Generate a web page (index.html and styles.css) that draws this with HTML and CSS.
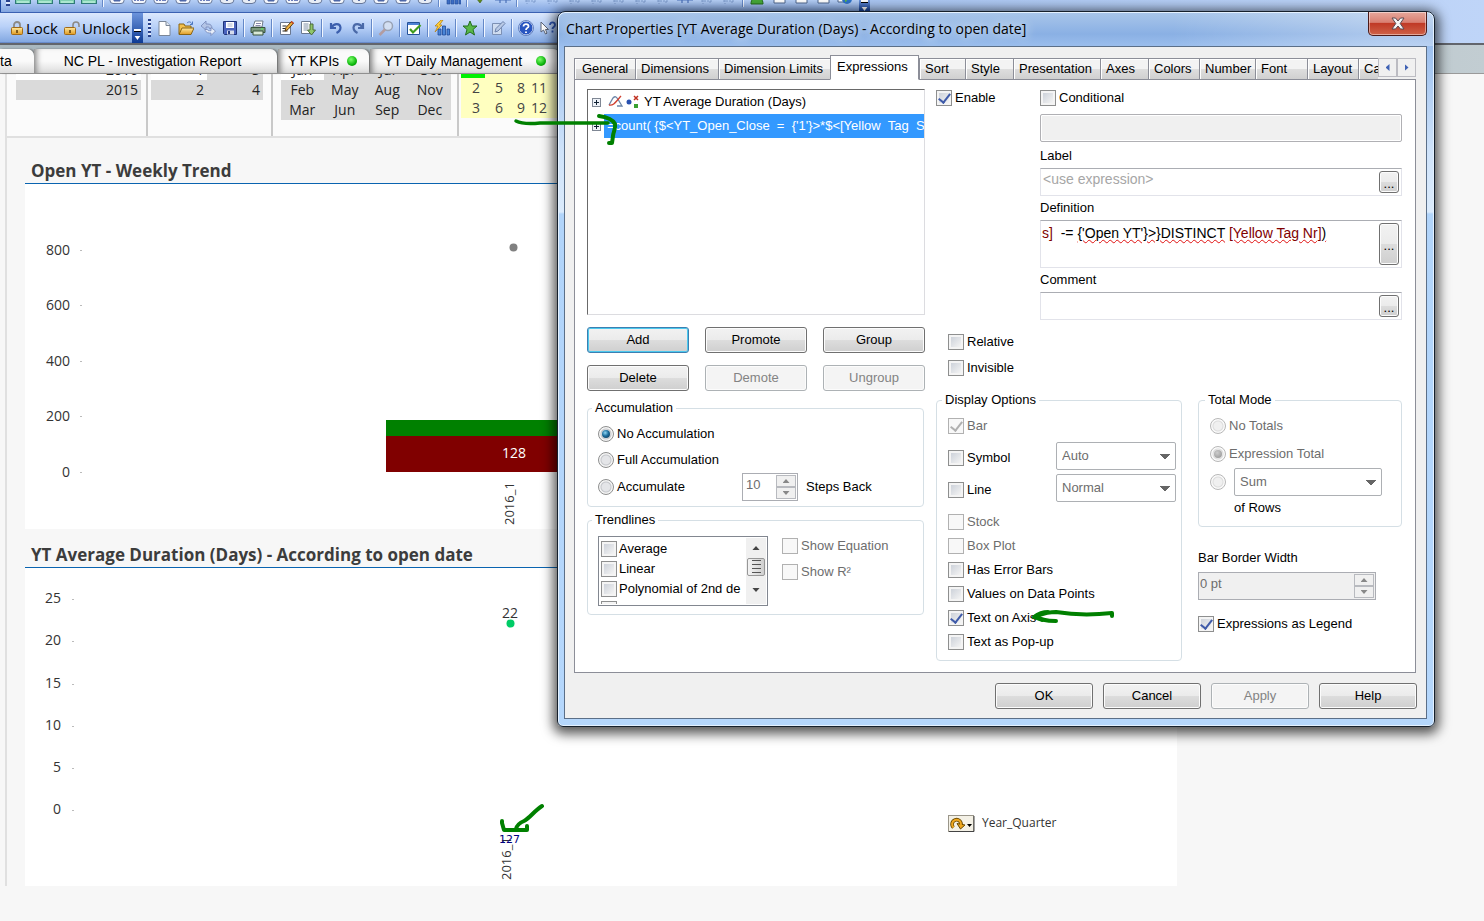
FILE: index.html
```html
<!DOCTYPE html>
<html lang="en">
<head>
<meta charset="utf-8">
<title>Chart Properties</title>
<link rel="stylesheet" href="styles.css">
</head>
<body>
<svg class="defs" width="0" height="0" aria-hidden="true">
  <defs>
    <linearGradient id="gFold" x1="0" y1="0" x2="0" y2="1"><stop offset="0" stop-color="#ffe9a0"/><stop offset="1" stop-color="#e09a20"/></linearGradient>
    <symbol id="t-green" viewBox="0 0 16 16"><rect x=".5" y=".5" width="15" height="14" fill="#7fd0ae" stroke="#2f7a78"/><path d="M2 13h12M3 7l4 4 5-5" stroke="#d9fff0" fill="none"/></symbol>
    <symbol id="t-box" viewBox="0 0 16 16"><rect x="1" y="1" width="14" height="13.5" rx="3" fill="#f4f7fc" stroke="#66779a"/><path d="M5 11.500h6M5 9v3h6V9" stroke="#4e68a8" fill="none"/></symbol>
    <symbol id="t-box2" viewBox="0 0 16 16"><rect x="1" y="1" width="14" height="13.500" rx="3" fill="#f4f7fc" stroke="#66779a"/><path d="M4 12V8M7 12V6M10 12V8M12 12V5" stroke="#4058a8" stroke-width="1.500"/></symbol>
    <symbol id="t-box3" viewBox="0 0 16 16"><rect x="1" y="1" width="14" height="13.500" rx="4" fill="#e8edf5" stroke="#66779a"/><path d="M8 4v8M5 9l3 3 3-3" stroke="#5870a8" fill="none"/></symbol>
    <symbol id="t-bars" viewBox="0 0 16 16"><path d="M2 15V8h3v7zM6 15V4h3v11zM10 15V7h3v8zM14 15v-5h2v5z" fill="#3c6dc4" stroke="#234a94" stroke-width=".6"/></symbol>
    <symbol id="t-chk" viewBox="0 0 16 16"><path d="M3 9l4 5 5-7-2-2-3 5-2-3z" fill="#5f8a1c" stroke="#3d5c10" stroke-width=".6"/></symbol>
    <symbol id="t-line" viewBox="0 0 16 16"><path d="M0 11h16M5 5v9M11 5v9" stroke="#4a70b8" stroke-width="1.200" fill="none"/></symbol>
    <symbol id="t-dim" viewBox="0 0 16 16"><path d="M2 12h12M4 8v7M8 9v3M11 9v6" stroke="#7c9acb" stroke-dasharray="2 1" fill="none"/></symbol>
    <symbol id="t-man" viewBox="0 0 16 16"><path d="M2 15c0-5 3-7 6-7s6 2 6 7z" fill="#46a838" stroke="#226a18"/><path d="M6 8l2 3 2-3z" fill="#fff"/></symbol>
    <symbol id="t-doc" viewBox="0 0 16 16"><path d="M3 1h11v13H3z" fill="#fff" stroke="#506890"/></symbol>
    <symbol id="t-globe" viewBox="0 0 16 16"><path d="M1 1h8v12H1z" fill="#fff" stroke="#506890"/><circle cx="10" cy="10" r="5" fill="#2f72c8"/><path d="M8 7c3-1 5 1 3 3s-1 3-3 3" fill="#5cb848"/></symbol>
    <symbol id="i-lock" viewBox="0 0 12 14"><path d="M3 7V4a3 3 0 0 1 6 0v3" fill="none" stroke="#8c8a86" stroke-width="1.800"/><rect x=".5" y="6.500" width="11" height="7" rx="1" fill="url(#gFold)" stroke="#a06a18"/><path d="M6 9v3" stroke="#5a3a08" stroke-width="1.500"/></symbol>
    <symbol id="i-unlock" viewBox="0 0 16 14"><path d="M9 7V4a3 3 0 0 1 6 0v2" fill="none" stroke="#8c8a86" stroke-width="1.600"/><rect x=".5" y="6.500" width="11" height="7" rx="1" fill="url(#gFold)" stroke="#a06a18"/><path d="M6 9v3" stroke="#5a3a08" stroke-width="1.500"/></symbol>
    <symbol id="i-new" viewBox="0 0 16 16"><path d="M3 1.500h7l4 4v10H3z" fill="#fff" stroke="#7a8698"/><path d="M10 1.500v4h4" fill="#dfe6f0" stroke="#7a8698"/></symbol>
    <symbol id="i-open" viewBox="0 0 16 16"><path d="M1 14V4h5l1 2h6v3" fill="#f3c04c" stroke="#8a6412"/><path d="M1 14.500L4 8h12l-3 6.500z" fill="url(#gFold)" stroke="#8a6412"/><path d="M9 3c2-2 4-1 5 1M14.500 1.500V4.500H12" fill="none" stroke="#4a76c0"/></symbol>
    <symbol id="i-refresh" viewBox="0 0 16 16"><path d="M1 6l5-5v3h2c3 0 4 2 4 4.500H9.500C9.500 7.500 9 7 8 7H6v3z" fill="#b4c5e6" stroke="#7487b8" stroke-width=".8"/><path d="M15.500 11l-4.500 4.500V13H9.500C6.500 13 5 11 5 9.500h2.500c0 .8.7 1.200 2 1.200H11V7.500z" fill="#e6edf9" stroke="#7487b8" stroke-width=".8"/></symbol>
    <symbol id="i-save" viewBox="0 0 16 16"><path d="M1.500 1.500h13v13h-12l-1-1z" fill="#4a63bc" stroke="#1e3278"/><path d="M4 2h8v6H4z" fill="#fff"/><path d="M5 10.500h7v4H5z" fill="#d5dcec"/><path d="M6 11h2v3H6z" fill="#263a80"/><path d="M5.500 4h5M5.500 6h5" stroke="#a9b4cc"/></symbol>
    <symbol id="i-print" viewBox="0 0 16 16"><path d="M5 1h8l-1 6H3z" fill="#fff" stroke="#6c7a88"/><path d="M1 7.500h14v5H1z" fill="#7e9a80" stroke="#38543c"/><path d="M3 11h10v4H3z" fill="#d9e8d6" stroke="#38543c"/><path d="M6 3.500h5M5.500 5.500h5" stroke="#88a"/><path d="M11 9h2" stroke="#5de05d" stroke-width="1.500"/></symbol>
    <symbol id="i-edit" viewBox="0 0 16 16"><path d="M2.500 2.500h10v12h-10z" fill="#fff" stroke="#6a7890"/><path d="M4.500 6h4M4.500 8.500h3M4.500 11h5" stroke="#222"/><path d="M7 11l1-3.500 5.500-6L15.500 3 10 9.500z" fill="#f0b23c" stroke="#5a3a10"/><path d="M13 1.500L15.500 3.500" stroke="#d04020" stroke-width="1.500"/></symbol>
    <symbol id="i-export" viewBox="0 0 16 16"><path d="M1.500 1.500h9v12h-9z" fill="#fff" stroke="#6a7890"/><path d="M3.500 4h5M3.500 6h5M3.500 8h5M3.500 10h4" stroke="#8090a8"/><path d="M10 4h3v6h2.500L11.500 15 7.500 10H10z" fill="#8fc66a" stroke="#4a6a38"/></symbol>
    <symbol id="i-undo" viewBox="0 0 16 16"><path d="M3 3v5h5M3.500 7.500C6 3 12 3 12.500 7.500c0 3-2 4.500-4 5.500" fill="none" stroke="#3c5fae" stroke-width="2.200"/></symbol>
    <symbol id="i-redo" viewBox="0 0 16 16"><path d="M13 3v5H8M12.500 7.500C10 3 4 3 3.500 7.500c0 3 2 4.500 4 5.500" fill="none" stroke="#4a69a8" stroke-width="2.200"/></symbol>
    <symbol id="i-search" viewBox="0 0 16 16"><circle cx="10" cy="6" r="4.500" fill="#d3dff2" stroke="#98a2b4" stroke-width="1.500"/><path d="M7 9.500L1.500 15" stroke="#b29ca0" stroke-width="2.500"/></symbol>
    <symbol id="i-check" viewBox="0 0 16 16"><path d="M1.500 2.500h12v12h-12z" fill="#fff" stroke="#24529a"/><path d="M2 4h11" stroke="#4e82d6" stroke-width="2"/><path d="M4 9l3 3.500L14.500 5" fill="none" stroke="#3f9c1c" stroke-width="2.200"/></symbol>
    <symbol id="i-chart" viewBox="0 0 16 16"><path d="M4 15V9h3v6zM8.500 15V6h3v9zM13 15V9h2.500v6z" fill="#4a86d8" stroke="#1e4a98" stroke-width=".8"/><path d="M7 0L1 6h3l-3 6 7-7H5.500L9 0z" fill="#ffcf3a" stroke="#b07a10" stroke-width=".7"/></symbol>
    <symbol id="i-star" viewBox="0 0 16 16"><path d="M8 1l2 5h5l-4 3.500 1.500 5.500L8 12l-4.500 3L5 9.500 1 6h5z" fill="#58b848" stroke="#256e20"/></symbol>
    <symbol id="i-note" viewBox="0 0 16 16"><path d="M2.500 3.500h9v11h-9z" fill="#cfdcf0" stroke="#7c90b4"/><path d="M5 12l1-3.500L13 1.500l2 2L8 11z" fill="#b9cae6" stroke="#6c82ac"/></symbol>
    <symbol id="i-help" viewBox="0 0 16 16"><circle cx="8" cy="8" r="7" fill="#2a56c0" stroke="#dfe8fa"/><circle cx="8" cy="8" r="7.500" fill="none" stroke="#3a5ca8" stroke-width=".7"/><path d="M5.500 6.500C5.500 3 11 3.500 10.500 6.500 10 8 8 8 8 10M8 11.500v1.500" fill="none" stroke="#fff" stroke-width="1.800"/></symbol>
    <symbol id="i-what" viewBox="0 0 16 16"><path d="M1 2v10l2.500-2L5.500 14l1.500-.8L5.500 9.500H8.500z" fill="#fff" stroke="#5a6478"/><path d="M10 5c0-3.500 5-3.500 5 0 0 2-2.500 2-2.500 4M12.500 10.500v2" fill="none" stroke="#2f58b8" stroke-width="1.800"/></symbol>
  </defs>
</svg>

<div class="app">
  <div class="bars">
    <div class="toolbar toolbar-top" aria-hidden="true">
      <i class="cap"></i><i class="grip"></i>
      <svg class="ic"><use href="#t-green"/></svg><svg class="ic"><use href="#t-green"/></svg><svg class="ic"><use href="#t-green"/></svg><svg class="ic"><use href="#t-green"/></svg>
      <i class="sep"></i>
      <svg class="ic"><use href="#t-box"/></svg><svg class="ic"><use href="#t-box2"/></svg><svg class="ic"><use href="#t-box2"/></svg><svg class="ic"><use href="#t-box"/></svg><svg class="ic"><use href="#t-box2"/></svg><svg class="ic"><use href="#t-box3"/></svg><svg class="ic"><use href="#t-box3"/></svg><svg class="ic"><use href="#t-box"/></svg><svg class="ic"><use href="#t-box2"/></svg><svg class="ic"><use href="#t-box3"/></svg><svg class="ic"><use href="#t-box"/></svg><svg class="ic"><use href="#t-box3"/></svg><svg class="ic"><use href="#t-box"/></svg><svg class="ic"><use href="#t-box"/></svg><svg class="ic"><use href="#t-box3"/></svg>
      <i class="sep"></i><svg class="ic"><use href="#t-bars"/></svg><i class="sep"></i>
      <svg class="ic"><use href="#t-chk"/></svg><svg class="ic"><use href="#t-line"/></svg><i class="sep"></i>
      <svg class="ic"><use href="#t-dim"/></svg><svg class="ic"><use href="#t-dim"/></svg><svg class="ic"><use href="#t-dim"/></svg><svg class="ic"><use href="#t-dim"/></svg><svg class="ic"><use href="#t-dim"/></svg><svg class="ic"><use href="#t-dim"/></svg><svg class="ic"><use href="#t-dim"/></svg><svg class="ic"><use href="#t-line"/></svg><svg class="ic"><use href="#t-dim"/></svg><svg class="ic"><use href="#t-dim"/></svg>
      <i class="sep"></i>
      <svg class="ic"><use href="#t-man"/></svg><svg class="ic"><use href="#t-doc"/></svg><svg class="ic"><use href="#t-doc"/></svg><svg class="ic"><use href="#t-doc"/></svg><svg class="ic"><use href="#t-globe"/></svg>
      <i class="more"></i>
    </div>
    <div class="toolbar toolbar-main">
      <button class="tb-text"><svg width="12" height="14"><use href="#i-lock"/></svg>Lock</button>
      <button class="tb-text"><svg width="16" height="14"><use href="#i-unlock"/></svg>Unlock</button>
      <i class="more"></i><i class="grip"></i>
      <button class="tb" aria-label="New"><svg><use href="#i-new"/></svg></button>
      <button class="tb" aria-label="Open"><svg><use href="#i-open"/></svg></button>
      <button class="tb" aria-label="Refresh"><svg><use href="#i-refresh"/></svg></button>
      <button class="tb" aria-label="Save"><svg><use href="#i-save"/></svg></button><i class="sep"></i>
      <button class="tb" aria-label="Print"><svg><use href="#i-print"/></svg></button><i class="sep"></i>
      <button class="tb" aria-label="Edit script"><svg><use href="#i-edit"/></svg></button>
      <button class="tb" aria-label="Reload"><svg><use href="#i-export"/></svg></button><i class="sep"></i>
      <button class="tb" aria-label="Undo"><svg><use href="#i-undo"/></svg></button>
      <button class="tb" aria-label="Redo"><svg><use href="#i-redo"/></svg></button><i class="sep"></i>
      <button class="tb" aria-label="Search"><svg><use href="#i-search"/></svg></button><i class="sep"></i>
      <button class="tb" aria-label="Current selections"><svg><use href="#i-check"/></svg></button><i class="sep"></i>
      <button class="tb" aria-label="Quick chart"><svg><use href="#i-chart"/></svg></button><i class="sep"></i>
      <button class="tb" aria-label="Add bookmark"><svg><use href="#i-star"/></svg></button><i class="sep"></i>
      <button class="tb" aria-label="Notes"><svg><use href="#i-note"/></svg></button><i class="sep"></i>
      <button class="tb" aria-label="Help"><svg><use href="#i-help"/></svg></button>
      <button class="tb" aria-label="What is this"><svg><use href="#i-what"/></svg></button>
    </div>
  </div>

  <nav class="sheets">
    <a class="sheet s1" href="#">ta</a>
    <a class="sheet s2" href="#">NC PL - Investigation Report</a>
    <a class="sheet s3" href="#">YT KPIs<i class="led"></i></a>
    <a class="sheet s4" href="#">YT Daily Management<i class="led"></i></a>
  </nav>

  <main class="workspace">
    <section class="filters">
      <div class="filter f-year"><div class="cells years"><span class="on">2016</span><span>2015</span></div></div>
      <div class="filter f-quarter"><div class="cells quarters"><span class="on">1</span><span>3</span><span>2</span><span>4</span></div></div>
      <div class="filter f-month"><div class="cells months"><span class="on">Jan</span><span>Apr</span><span>Jul</span><span>Oct</span><span>Feb</span><span>May</span><span>Aug</span><span>Nov</span><span>Mar</span><span>Jun</span><span>Sep</span><span>Dec</span></div></div>
      <div class="filter f-week"><div class="cells weeks"><span class="go"></span><span></span><span></span><span></span><span></span><span>2</span><span>5</span><span>8</span><span>11</span><span></span><span>3</span><span>6</span><span>9</span><span>12</span><span></span></div></div>
    </section>

    <section class="chart">
      <h2>Open YT - Weekly Trend</h2>
      <svg class="plot" height="345">
        <g class="axis" text-anchor="end"><text x="45" y="71">800</text><text x="45" y="126">600</text><text x="45" y="182">400</text><text x="45" y="237">200</text><text x="45" y="293">0</text></g>
        <path class="tick" d="M55 66.500h2M55 121.500h2M55 177.500h2M55 232.500h2M55 288.500h2"/>
        <circle cx="488.500" cy="63.500" r="4" fill="#808080"/>
        <rect x="361" y="236" width="246" height="16" fill="#008000"/>
        <rect x="361" y="252" width="246" height="36" fill="#800000"/>
        <text class="inv" x="477" y="274">128</text>
        <text class="turned" transform="translate(489 341) rotate(-90)">2016_1</text>
      </svg>
    </section>

    <section class="chart">
      <h2>YT Average Duration (Days) - According to open date</h2>
      <svg class="plot" height="318">
        <g class="axis" text-anchor="end"><text x="36" y="35">25</text><text x="36" y="77">20</text><text x="36" y="120">15</text><text x="36" y="162">10</text><text x="36" y="204">5</text><text x="36" y="246">0</text></g>
        <path class="tick" d="M47 31.500h2M47 73.500h2M47 116.500h2M47 158.500h2M47 200.500h2M47 242.500h2"/>
        <text x="477" y="50">22</text>
        <circle cx="485.500" cy="55.500" r="4" fill="#00cc66"/>
        <text class="turned" transform="translate(486 312) rotate(-90)">2016_1</text>
        <text class="below" x="474" y="275">127</text>
        <g transform="translate(923 246)"><rect x=".5" y="1.500" width="25" height="16" fill="#f4f1e6" stroke="#9a968a"/><path d="M1 17.500h25V2" fill="none" stroke="#444"/><path d="M5.500 13.500A4.500 4.500 0 1 1 13 11" fill="none" stroke="#6a4a00" stroke-width="3.600"/><path d="M9 9.500l3.500 5.500 4.500-4z" fill="#f0a820" stroke="#6a4a00"/><path d="M5.500 13.500A4.500 4.500 0 1 1 13 11" fill="none" stroke="#f0a820" stroke-width="2"/><path d="M19 10h5l-2.500 3z"/></g>
        <text class="legend" x="957" y="259">Year_Quarter</text>
      </svg>
    </section>
  </main>
</div>

<div class="dialog" role="dialog" aria-labelledby="dlg-title">
  <header class="titlebar">
    <h1 id="dlg-title">Chart Properties [YT Average Duration (Days) - According to open date]</h1>
    <button class="close" aria-label="Close"><svg width="14" height="13" viewBox="0 0 14 13"><path d="M1 1h3.500L7 4l2.500-3H13L9.200 6.500 13 12H9.500L7 9l-2.500 3H1l3.800-5.500z" fill="#f4f4f4" stroke="#5a4a52"/></svg></button>
  </header>
  <div class="client">
    <div class="tabs" role="tablist">
      <button role="tab">General</button><button role="tab">Dimensions</button><button role="tab">Dimension Limits</button><button role="tab" class="active" aria-selected="true">Expressions</button><button role="tab">Sort</button><button role="tab">Style</button><button role="tab">Presentation</button><button role="tab">Axes</button><button role="tab">Colors</button><button role="tab">Number</button><button role="tab">Font</button><button role="tab">Layout</button><button role="tab" class="cut">Caption</button>
      <div class="scrollers"><button aria-label="Scroll left"><i class="tri-l"></i></button><button aria-label="Scroll right"><i class="tri-r"></i></button></div>
    </div>
    <div class="page" role="tabpanel">
      <div class="left">
        <ul class="tree">
          <li><i class="plus"></i><svg class="kind" width="32" height="14" viewBox="0 0 32 14"><path d="M1 10L5 3c3-3 4 0 6 3l3 5H9" fill="none" stroke="#6d86a8" stroke-width="1.300"/><path d="M1 10c4 1 6-2 12-9" fill="none" stroke="#d04030" stroke-width="1.300"/><circle cx="21" cy="7" r="2.500" fill="#2850b0"/><path d="M26 1l4 4M30 1l-4 4" stroke="#c03020" stroke-width="1.500"/><path d="M26 9h4v4h-4z" fill="#38a030"/></svg><span class="name">YT Average Duration (Days)</span></li>
          <li class="sel"><i class="plus"></i><span class="name">=count( {$&lt;YT_Open_Close&nbsp; =&nbsp; {'1'}&gt;*$&lt;[Yellow&nbsp; Tag&nbsp; S</span></li>
        </ul>
        <div class="actions">
          <button class="btn default">Add</button><button class="btn">Promote</button><button class="btn">Group</button>
          <button class="btn">Delete</button><button class="btn" disabled>Demote</button><button class="btn" disabled>Ungroup</button>
        </div>
        <fieldset class="accum">
          <legend>Accumulation</legend>
          <label class="opt"><input type="radio" name="acc" checked>No Accumulation</label>
          <label class="opt"><input type="radio" name="acc">Full Accumulation</label>
          <div class="steps">
            <label class="opt"><input type="radio" name="acc">Accumulate</label>
            <span class="spin"><input type="text" id="steps" value="10" disabled><span class="ud"><i></i><i></i></span></span>
            <label for="steps">Steps Back</label>
          </div>
        </fieldset>
        <fieldset class="trend">
          <legend>Trendlines</legend>
          <div class="checklist">
            <div class="items">
              <label><input type="checkbox">Average</label><label><input type="checkbox">Linear</label><label><input type="checkbox">Polynomial of 2nd de</label><label><input type="checkbox">Polynomial of 3rd de</label>
            </div>
            <div class="scroll"><i class="up"></i><i class="thumb"></i><i class="down"></i></div>
          </div>
          <div class="show">
            <label class="opt off"><input type="checkbox" disabled>Show Equation</label>
            <label class="opt off"><input type="checkbox" disabled>Show R²</label>
          </div>
        </fieldset>
      </div>

      <div class="right">
        <div class="top">
          <label class="opt enable"><input type="checkbox" checked>Enable</label>
          <div class="fields">
            <label class="opt"><input type="checkbox">Conditional</label>
            <div class="field dis"><input type="text" aria-label="Condition" disabled></div>
            <label class="cap-l first" for="lab">Label</label>
            <div class="field"><input type="text" id="lab" placeholder="&lt;use expression&gt;"><button class="dots">...</button></div>
            <span class="cap-l" id="def-l">Definition</span>
            <div class="field tall"><div class="code" role="textbox" contenteditable="true" spellcheck="false" aria-labelledby="def-l"><span class="fld">s]</span>&nbsp; -= <span class="wave">{'Open YT'}&gt;}DISTINCT</span> <span class="wave"><span class="fld">[Yellow Tag Nr]</span>)</span></div><button class="dots">...</button></div>
            <label class="cap-l" for="com">Comment</label>
            <div class="field"><input type="text" id="com"><button class="dots">...</button></div>
          </div>
        </div>
        <div class="flags">
          <label class="opt"><input type="checkbox">Relative</label>
          <label class="opt"><input type="checkbox">Invisible</label>
        </div>
        <div class="bottom">
          <fieldset class="display">
            <legend>Display Options</legend>
            <div class="row"><label class="opt off"><input type="checkbox" checked disabled>Bar</label></div>
            <div class="row"><label class="opt"><input type="checkbox">Symbol</label><select disabled aria-label="Symbol"><option>Auto</option></select></div>
            <div class="row"><label class="opt"><input type="checkbox">Line</label><select disabled aria-label="Line"><option>Normal</option></select></div>
            <div class="more-opts">
              <label class="opt off"><input type="checkbox" disabled>Stock</label>
              <label class="opt off"><input type="checkbox" disabled>Box Plot</label>
              <label class="opt"><input type="checkbox">Has Error Bars</label>
              <label class="opt"><input type="checkbox">Values on Data Points</label>
              <label class="opt"><input type="checkbox" checked>Text on Axis</label>
              <label class="opt"><input type="checkbox">Text as Pop-up</label>
            </div>
          </fieldset>
          <div class="side">
            <fieldset class="total">
              <legend>Total Mode</legend>
              <label class="opt off"><input type="radio" name="tot" disabled>No Totals</label>
              <label class="opt off"><input type="radio" name="tot" checked disabled>Expression Total</label>
              <div class="agg"><input type="radio" name="tot" disabled aria-label="Aggregate of rows"><select disabled aria-label="Aggregate"><option>Sum</option></select></div>
              <span class="ofrows">of Rows</span>
            </fieldset>
            <label class="bbw" for="bbw">Bar Border Width</label>
            <span class="spin grey"><input type="text" id="bbw" value="0 pt" disabled><span class="ud"><i></i><i></i></span></span>
            <label class="opt asleg"><input type="checkbox" checked>Expressions as Legend</label>
          </div>
        </div>
      </div>
    </div>
    <footer class="foot">
      <button class="btn">OK</button><button class="btn">Cancel</button><button class="btn" disabled>Apply</button><button class="btn">Help</button>
    </footer>
  </div>
</div>

<svg class="ink" width="1130" height="860" aria-hidden="true">
  <path d="M516 121c6 3 14 3 24 2h68" stroke-width="3.500"/>
  <path d="M599 116c8 1 14 4 16 8 1 5-2 8-2 12l-1 7h-3" stroke-width="4"/>
  <path d="M1112 616v-3c-18 2-38 2-56-1-9 0-14 2-20 4 4 4 10 5 20 5" stroke-width="4"/>
  <path d="M1048 612c-6 0-10 2-14 5l8 3" stroke-width="4"/>
  <path d="M502 821v2l2 7 23 0v-4M542 806c-8 5-12 12-18 15-5 2-7 4-8 8" stroke-width="4"/>
</svg>
</body>
</html>
```

FILE: styles.css
```css
* { box-sizing: border-box; }
html, body { min-height: 100%; }
body {
  margin: 0;
  position: relative;
  background: #f7f7f7;
  font: 13px/16px "Liberation Sans", Arial, sans-serif;
  color: #000;
  overflow-x: hidden;
}
button, input, select { font: inherit; color: inherit; margin: 0; padding: 0; border: 0; background: none; }
.defs { display: block; position: absolute; }
i { display: block; font-style: normal; }

/* toolbars */
.bars { background: linear-gradient(90deg, #9dbcee 0, #aac6f2 60%, #bfd5f8 100%); border-bottom: 2px solid #62656c; height: 45px; }
.toolbar { display: flex; align-items: center; }
.toolbar-top {
  height: 13px; width: 870px; max-width: 100%;
  align-items: flex-end; overflow: hidden;
  background: linear-gradient(#b5cef5, #82a5e0);
  border-bottom: 1px solid #3a61b2;
}
.toolbar-top .ic { width: 16px; height: 16px; margin: 0 3px 7px; flex: none; }
.toolbar-top .sep { height: 7px; margin-bottom: 5px; }
.toolbar-top .grip { width: 4px; height: 6px; margin: 0 2px 6px 5px; }
.toolbar-top .more { height: 12px; width: 11px; margin-left: 3px; }
.cap { width: 2px; height: 13px; background: #1d47a0; }
.toolbar-main {
  height: 30px; padding-left: 8px; max-width: 900px; overflow: hidden;
  background: linear-gradient(#dbe8fd, #b9d1f8 45%, #83a8e2 96%, #5577bb);
}
.tb-text { display: flex; align-items: center; gap: 3px; padding: 0 3px; font: 15px/20px "Open Sans", "Noto Sans", sans-serif; }
.tb-text + .tb-text { gap: 2px; padding-right: 2px; }
.tb-text svg { flex: none; }
.tb { width: 22px; height: 22px; flex: none; display: grid; place-items: center; }
.tb svg { width: 16px; height: 16px; display: block; }
.sep { width: 2px; height: 18px; margin: 0 2px; flex: none; background: linear-gradient(90deg, #6488c8 50%, #f2f7ff 50%); }
.grip { width: 3px; height: 18px; margin: 0 2px 0 5px; flex: none; background: repeating-linear-gradient(#27418c 0 2px, #dfe9fb 2px 4px); }
.more { width: 11px; height: 30px; flex: none; background: linear-gradient(#6c94dc, #0d3a94); display: grid; place-items: end center; }
.more::after { content: ""; width: 7px; height: 7px; margin-bottom: 3px; background: linear-gradient(#fff 2px, #000 2px 3px, transparent 3px); border-bottom: 4px solid #fff; clip-path: polygon(0 0, 100% 0, 100% 55%, 50% 100%, 0 55%); }

/* sheet tabs */
.sheets { display: flex; align-items: flex-end; height: 29px; background: linear-gradient(90deg, #a9b8bf 60%, #c2cdd2); border-bottom: 1px solid #9a9a9a; }
.sheet {
  height: 24px; display: flex; align-items: center; justify-content: center; gap: 8px;
  color: #000; text-decoration: none; white-space: nowrap;
  font: 14px/22px "Liberation Sans", Arial, sans-serif;
  background: linear-gradient(#fafafa 50%, #dcdcdc);
  border-radius: 0 7px 0 0;
  box-shadow: inset 6px 0 6px -4px #777, 2px 0 2px #777;
}
.s1 { width: 34px; justify-content: flex-start; box-shadow: 2px 0 2px #777; }
.s2 { width: 243px; padding-right: 6px; margin-right: 1px; }
.s3 { width: 91px; margin-right: 1px; padding-right: 2px; }
.s4 { width: 190px; gap: 14px; }
.led { width: 10px; height: 10px; border-radius: 50%; background: radial-gradient(circle at 40% 35%, #7dff6a, #0db80d 60%, #067006); }

/* workspace */
.workspace { margin-left: 5px; border-left: 2px solid #e0e0e0; }
.filters { display: flex; max-width: 1170px; height: 64px; overflow: hidden; background: #fbfbfb; border-bottom: 2px solid #e0e0e0; font: 14px/20px "Open Sans", sans-serif; }
.filter { flex: none; border-right: 2px solid #c9c9c9; }
.cells { display: grid; grid-auto-rows: 20px; margin-top: -14px; text-align: center; color: #222; }
.cells span { background: #dadada; }
.cells .on { background: #fff; }
.f-year { width: 141px; padding: 0 5px 0 9px; }
.years { text-align: right; }
.years span { padding-right: 3px; }
.f-quarter { width: 125px; padding: 0 8px 0 3px; }
.quarters { grid-template-columns: 1fr 1fr; text-align: right; }
.quarters span { padding-right: 3px; }
.f-month { width: 186px; padding: 0 6px 0 8px; }
.months { grid-template-columns: repeat(4, 1fr); }
.f-week { padding: 0 0 0 2px; border: 0; }
.weeks { grid-template-columns: 24px 22px 22px 20px 8px; margin-top: -16px; color: #444; }
.weeks span { background: #ffffc0; padding-left: 6px; }
.weeks span:nth-child(5n + 4) { padding-left: 0; }
.weeks .go { background: #00f000; }

.chart { margin: 0 0 0 18px; max-width: 1152px; }
.chart h2 {
  margin: 0; padding: 22px 0 0 6px; height: 46px; border-bottom: 1px solid #0a64b0;
  font: bold 17px/22px "Open Sans", sans-serif; color: #3c3c3c; white-space: nowrap;
}
.chart + .chart h2 { height: 39px; padding-top: 15px; }
.plot { display: block; width: 100%; background: #fff; }
.plot text { font: 14px "Open Sans", sans-serif; fill: #333; }
.plot .inv { fill: #fff; }
.plot .turned { font-size: 13px; }
.plot .below { font: 11px "DejaVu Sans", sans-serif; fill: #000080; }
.plot .legend { font-size: 12px; }
.tick { stroke: #bbb; fill: none; }

/* dialog */
.dialog {
  position: absolute; left: 557px; right: 49px; top: 11px;
  min-width: 760px;
  border: 1px solid #16202c; border-radius: 8px 8px 6px 6px;
  background: linear-gradient(90deg, transparent 70%, rgba(255,255,255,.3) 95%) 0 0/100% 34px no-repeat, linear-gradient(#a9c6ea 0, #8ab0e4 22px, #9dc0ee 36px, #cfe3fa 140px, #dbebfc 200px, #b1d4fa 202px, #b5d7fc 100%);
  box-shadow: inset 0 0 0 1px #e4f1ff, 0 3px 12px 4px rgba(0,0,0,.65);
  padding: 0 7px 7px 6px;
}
.titlebar { display: flex; justify-content: space-between; align-items: flex-start; height: 34px; }
.titlebar h1 { margin: 0; padding: 6px 2px; font: 14px/22px "Open Sans", sans-serif; color: #000; white-space: nowrap; text-shadow: 0 0 8px #e8f1fc, 0 0 12px #d8e8fa; }
.close { width: 59px; height: 24px; flex: none; display: grid; place-items: center; border: 1px solid #4c1a18; border-top: 0; border-radius: 0 0 5px 5px; background: linear-gradient(#e6a79b 0, #d98072 45%, #c03a26 50%, #cf6248 100%); box-shadow: inset 0 0 0 1px rgba(255,255,255,.45); }
.client { border: 1px solid #5b6f88; background: #f0f0f0; padding: 8px 10px 9px 9px; }

.tabs { display: grid; grid-template-columns: 61fr 83fr 112fr 89fr 46fr 48fr 87fr 48fr 51fr 56fr 52fr 51fr 20fr 38px; align-items: end; height: 25px; margin: 0 0 -1px; }
.tabs > button {
  height: 22px; min-width: 0; overflow: hidden; white-space: nowrap; text-align: left; padding: 0 0 0 5px;
  border: 1px solid #8c8e98; border-right: 0;
  background: linear-gradient(#f3f3f3 50%, #dedede 50%, #d0d0d0);
  box-shadow: inset 1px 1px 0 #fff;
}
.tabs > button.active { height: 25px; background: #fff; border-bottom-color: #fff; border-right: 1px solid #8c8e98; padding: 0 0 2px 6px; position: relative; }
.tabs > button:first-child { padding-left: 7px; }
.scrollers { display: flex; align-self: center; }
.scrollers button { flex: 1; height: 19px; border: 1px solid #bcbcc2; background: #f0f0f0; display: grid; place-items: center; }
.tri-l, .tri-r { width: 4px; height: 7px; background: #3f62b4; clip-path: polygon(100% 0, 0 50%, 100% 100%); }
.tri-r { clip-path: polygon(0 0, 100% 50%, 0 100%); }

.page { background: #fff; border: 1px solid #8c8e98; padding: 9px 13px 11px 12px; display: grid; grid-template-columns: 338fr 465fr; gap: 12px; }
.left, .right { min-width: 0; display: flex; flex-direction: column; }
.tree { list-style: none; margin: 0; padding: 0; height: 226px; overflow: hidden; border: 1px solid #dcdce0; border-top: 1px solid #696969; border-left: 1px solid #696969; }
.tree li { display: flex; align-items: center; height: 24px; padding-left: 4px; white-space: nowrap; }
.tree .kind { margin: 0 4px 0 7px; flex: none; }
.tree .name { line-height: 24px; flex: 1; }
.sel .name { background: #3399ff; color: #fff; margin-left: 3px; padding-left: 3px; overflow: hidden; }
.plus { width: 9px; height: 9px; flex: none; border: 1px solid #7f8794; background: linear-gradient(#123, #123) center/5px 1px no-repeat, linear-gradient(#123, #123) center/1px 5px no-repeat, #eef2f8; }
.actions { display: grid; grid-template-columns: repeat(3, 1fr); gap: 12px 16px; margin: 12px 0 9px; }
.btn { height: 26px; border: 1px solid #707070; border-radius: 3px; text-align: center; background: linear-gradient(#f2f2f2, #ebebeb 50%, #dddddd 50%, #cfcfcf); box-shadow: inset 0 0 0 1px #fcfcfc; }
.btn.default { border-color: #3c7fb1; box-shadow: inset 0 0 0 1px #4cc9ee; }
.btn:disabled { border-color: #adb2b5; background: #f4f4f4; color: #838383; }

fieldset { margin: 0; min-width: 0; border: 1px solid #d5dfe5; border-radius: 4px; }
legend { padding: 0 3px; margin-left: -6px; line-height: 16px; }
.opt { display: flex; align-items: center; gap: 3px; height: 26px; white-space: nowrap; }
.off { color: #6d6d6d; }
input[type=checkbox], input[type=radio] { appearance: none; width: 16px; height: 16px; flex: none; display: grid; place-items: center; }
input[type=checkbox] { border: 1px solid #8e8f8f; background: linear-gradient(135deg, #cdd2da, #f4f4f4) center/10px 10px no-repeat, #f4f4f4; }
input[type=checkbox]:checked::after { content: ""; width: 5px; height: 10px; margin-top: -3px; border: solid #3f5ba9; border-width: 0 2px 2px 0; transform: rotate(38deg); }
input[type=checkbox]:disabled { border-color: #b1b1b1; background: #f8f8f8; }
input[type=checkbox]:disabled::after { border-color: #b0b0b0; }
input[type=radio] { border: 1px solid #8e8f8f; border-radius: 50%; background: radial-gradient(circle, #e4e5e8 0 4px, #c4c6ca 5px, #f4f4f4 6px); }
input[type=radio]:checked::after { content: ""; width: 8px; height: 8px; border-radius: 50%; background: radial-gradient(circle at 40% 35%, #8fd6f4, #1c6c9c 45%, #0c2c48); }
input[type=radio]:disabled { border-color: #b8b8b8; background: radial-gradient(circle, #f0f0f0 0 4px, #dcdcdc 5px, #fafafa 6px); }
input[type=radio]:disabled:checked::after { background: radial-gradient(circle at 40% 35%, #ccc, #909090); }

.accum { padding: 5px 10px 7px; margin: 0 1px 5px 0; }
.steps { display: grid; grid-template-columns: 144px 64px auto; align-items: center; height: 26px; }
.steps .spin { width: 56px; }
.spin { display: flex; height: 28px; border: 1px solid #abadb3; padding: 1px; color: #6d6d6d; background: #fff; }
.spin input { flex: 1; min-width: 0; padding: 0 0 5px 2px; }
.grey { background: #f0f0f0; }
.ud { width: 20px; display: grid; grid-template-rows: 1fr 1fr; }
.ud i { border: 1px solid #b8babf; display: grid; place-items: center; background: #f0f0f0; }
.ud i::after { content: ""; width: 7px; height: 4px; background: #888; clip-path: polygon(50% 0, 100% 100%, 0 100%); }
.ud i:last-child::after { clip-path: polygon(0 0, 100% 0, 50% 100%); }

.trend { display: flex; gap: 14px; padding: 8px 10px; margin-right: 1px; }
.checklist { width: 170px; height: 70px; overflow: hidden; border: 1px solid #828790; padding: 1px; display: flex; }
.items { flex: 1; min-width: 0; overflow: hidden; }
.items label { display: flex; align-items: center; gap: 2px; height: 20px; white-space: nowrap; padding: 1px 0 0 1px; }
.scroll { width: 20px; background: #f0f0f0; display: flex; flex-direction: column; align-items: center; }
.scroll .up, .scroll .down { width: 8px; height: 5px; margin: 8px 0; background: #444; clip-path: polygon(50% 0, 100% 100%, 0 100%); }
.scroll .down { clip-path: polygon(0 0, 100% 0, 50% 100%); margin: 12px 0; }
.scroll .thumb { width: 18px; height: 19px; border: 1px solid #979797; border-radius: 2px; background: repeating-linear-gradient(#555 0 1px, transparent 1px 4px) center/9px 13px no-repeat, linear-gradient(90deg, #f4f4f4, #cfcfcf); }
.show { margin-top: -3px; }

.top { display: grid; grid-template-columns: 103px 1fr; }
.top .opt { height: 18px; }
.enable { margin-left: -1px; }
.fields { display: grid; }
.field { height: 28px; border: 1px solid #e2e3ea; border-top-color: #abadb3; display: flex; padding: 2px 2px 2px 1px; }
.field input { flex: 1; min-width: 0; font-size: 14px; padding: 0 0 6px 1px; }
.field input::placeholder { color: #a6a6a6; opacity: 1; }
.field.dis { margin-top: 7px; background: #f0f0f0; border: 1px solid #b0b0b4; border-radius: 2px; box-shadow: inset 0 0 0 1px #fff; }
.field.tall { height: 48px; }
.cap-l { margin: 4px 0; }
.cap-l.first { margin-top: 6px; }
.dots { width: 20px; flex: none; border: 1px solid #707070; border-radius: 3px; padding-top: 4px; line-height: 14px; background: linear-gradient(#f2f2f2, #ebebeb 50%, #dddddd 50%, #cfcfcf); box-shadow: inset 0 0 0 1px #fcfcfc; }
.code { flex: 1; min-width: 0; overflow: hidden; white-space: nowrap; font-size: 14px; line-height: 20px; outline: 0; }
.fld { color: #800000; }
.wave { text-decoration: underline wavy #e01010 1px; }
.flags { margin: 9px 0 11px 11px; }
.bottom { display: grid; grid-template-columns: 246fr 204fr; gap: 16px; margin-left: -1px; align-items: start; }
.display { padding: 2px 5px 6px 11px; }
.total legend { margin-left: -5px; }
.row { display: grid; grid-template-columns: 108fr 120fr; height: 32px; align-items: start; }
.row .opt { height: 32px; }
select { appearance: none; height: 28px; width: 100%; border: 1px solid #adb0b4; border-radius: 2px; padding: 0 5px; color: #6d6d6d; opacity: 1;
  background: conic-gradient(from -45deg at 50% 100%, #666 90deg, transparent 0) right 5px center/10px 5px no-repeat, #fff; }
.more-opts { margin-top: 4px; }
.more-opts .opt { height: 24px; }
.side { min-width: 0; display: flex; flex-direction: column; }
.total { padding: 4px 19px 6px 11px; }
.total .opt { height: 28px; }
.agg { display: grid; grid-template-columns: 24px 1fr; align-items: center; }
.ofrows { display: block; padding-left: 24px; line-height: 24px; }
.bbw { margin: 23px 0 6px; }
.side > .spin { width: 178px; }
.grey input { padding-left: 0; }
.asleg { margin-top: 11px; }
.foot { display: flex; justify-content: flex-end; gap: 10px; padding-top: 10px; margin-right: -1px; }
.foot .btn { width: 98px; }

/* pen marks drawn above everything */
.ink { position: absolute; left: 0; top: 0; pointer-events: none; }
.ink path { fill: none; stroke: #008000; stroke-linecap: round; stroke-linejoin: round; }
```
